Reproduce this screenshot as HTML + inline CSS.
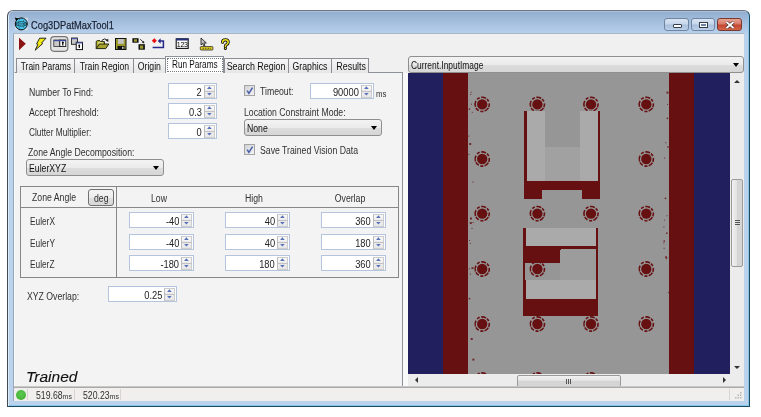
<!DOCTYPE html>
<html><head><meta charset="utf-8"><style>
*{box-sizing:border-box;margin:0;padding:0}
body{will-change:transform}
html,body{width:761px;height:417px;overflow:hidden;background:#fff;font-family:"Liberation Sans",sans-serif;font-size:10px;color:#303030}
div{position:absolute}
.t{white-space:pre;line-height:11px;transform:scaleX(0.87);transform-origin:0 0}
.tc{white-space:pre;line-height:11px;transform:translateX(-50%) scaleX(0.87);transform-origin:50% 0}
#win{left:7px;top:10px;width:743px;height:397px;border:1px solid #404a54;border-top-color:#6c727a;border-right-color:#1e4a5c;border-bottom-color:#1e4a5c;border-radius:6px 6px 0 0;background:linear-gradient(#c4d8ee 0px,#94aed0 1px,#b6d0ec 22px,#bad2ec 23px,#bad2ec 100%);box-shadow:inset 1px 0 0 #dcebf8,inset -1px -1px 0 #86c6ec}
#client{left:13px;top:33px;width:731px;height:368px;background:#f0f0f0;border-left:1px solid #98a8bc;border-top:1px solid #aab6c4}
.spin{background:#fff;border:1px solid #b4c4dc}
.sv{top:3px;line-height:11px;white-space:pre;color:#222;transform:scaleX(0.93);transform-origin:100% 0}
.sb{right:1px;width:11px;height:6px;border:1px solid #d2d2d2;border-left-color:#c2c2c2;background:linear-gradient(#f6f6f6,#e9e9e9)}
.sb.up{top:1px}
.sb.dn{top:7px}
.sbx{position:absolute;right:1px;top:1px}
.combo{border:1px solid #8f8f8f;border-radius:3px;background:linear-gradient(#f3f3f3 0%,#ebebeb 50%,#dddddd 51%,#d6d6d6 100%)}
.cv{left:2px;top:3px;line-height:11px;white-space:pre;color:#111;transform:scaleX(0.87);transform-origin:0 0}
.carr{right:4px;top:6px;width:0;height:0;border-left:3.5px solid transparent;border-right:3.5px solid transparent;border-top:4px solid #000}
.chk{width:11px;height:11px;border:1px solid #a4a4a4;background:linear-gradient(135deg,#cfd2d6,#f4f4f4)}
.chk svg{position:absolute;left:-1px;top:-1px}
.tab{top:58px;height:15px;padding-top:2px;border:1px solid #8c8e94;border-bottom:none;background:linear-gradient(#f6f6f6,#e6e6e6);line-height:12px;white-space:pre;color:#111;text-align:center}
.tab span{display:inline-block;transform:scaleX(0.87)}
</style></head><body>
<svg width="0" height="0" style="position:absolute"><defs><linearGradient id="sbg" x1="0" y1="0" x2="0" y2="1"><stop offset="0" stop-color="#f8f8f8"/><stop offset="1" stop-color="#e6e6e6"/></linearGradient></defs></svg>
<div id="win"></div>
<div id="client"></div>
<svg style="position:absolute;left:14px;top:17px" width="15" height="14" viewBox="0 0 15 14"><rect x="1" y="0.6" width="13" height="12.6" fill="#dfe6ee" opacity="0.7"/><circle cx="7.3" cy="6.9" r="6" fill="#48ccf2" stroke="#0c0c10" stroke-width="1"/><ellipse cx="7.3" cy="6.9" rx="5.6" ry="2.2" fill="none" stroke="#0c0c10" stroke-width="0.7"/><path d="M2 6.9 H12.6" stroke="#0c0c10" stroke-width="0.6"/><ellipse cx="7.3" cy="6.9" rx="2.6" ry="5.6" fill="none" stroke="#0c0c10" stroke-width="0.6" stroke-dasharray="1.2 1.6"/><path d="M0.8 0.6 L4.6 1.4 L2 4.2 Z" fill="#000"/></svg>
<div class="t" style="left:31px;top:19px;font-size:11.5px;line-height:13px;color:#1a2233;transform:scaleX(0.81);-webkit-text-stroke:0.25px #1a2233">Cog3DPatMaxTool1</div>
<div style="left:664px;top:18px;width:25px;height:13px;border:1px solid #6f85a3;border-radius:3px;background:linear-gradient(#d8e4f2 0,#c6d6ea 45%,#a9c0dc 55%,#bcd0e8 100%)"><div style="left:8px;top:5px;width:9px;height:4px;background:#fff;border:1px solid #36404c;border-radius:1px"></div></div>
<div style="left:691px;top:18px;width:24px;height:13px;border:1px solid #6f85a3;border-radius:3px;background:linear-gradient(#d8e4f2 0,#c6d6ea 45%,#a9c0dc 55%,#bcd0e8 100%)"><div style="left:7px;top:3px;width:9px;height:6px;background:#fff;border:1px solid #36404c"><div style="left:1px;top:1px;width:5px;height:2px;background:#6f85a3"></div></div></div>
<div style="left:717px;top:18px;width:25px;height:13px;border:1px solid #7a3a30;border-radius:3px;background:linear-gradient(#e8a492 0,#d9796a 45%,#c44630 55%,#d2674a 100%)"><svg style="position:absolute;left:7px;top:2px" width="10" height="8" viewBox="0 0 10 8"><path d="M1.5 1 L8.5 7 M8.5 1 L1.5 7" stroke="#3a2a2a" stroke-width="3"/><path d="M1.5 1 L8.5 7 M8.5 1 L1.5 7" stroke="#fff" stroke-width="1.8"/></svg></div>
<svg style="position:absolute;left:0;top:0" width="761" height="60" viewBox="0 0 761 60"><path d="M19 37.8 L25.8 43.8 L19 50.2 Z" fill="#8a1212"/><path d="M39.6 38.2 L46 38.2 L41.6 43 L42.6 43.6 L35.2 50.2 L37.8 44.6 L36.6 44 Z" fill="#f2ea10" stroke="#111" stroke-width="0.9" stroke-linejoin="round"/><rect x="50.7" y="36.7" width="17.2" height="14.6" rx="3.5" fill="#e4e4e4" stroke="#767676" stroke-width="1.2"/><rect x="53.8" y="40" width="6" height="6.5" fill="#c8c8c8" stroke="#333" stroke-width="0.8"/><rect x="59.8" y="40" width="6" height="6.5" fill="#fff" stroke="#111" stroke-width="0.9"/><rect x="53.8" y="40" width="12" height="1.2" fill="#3e4aa0"/><path d="M62.8 42 L62.8 45.5" stroke="#000" stroke-width="1.2"/><circle cx="62.8" cy="42.5" r="1" fill="#000"/><rect x="71.5" y="38" width="6" height="6.3" fill="#c8c8c8" stroke="#222" stroke-width="0.9"/><rect x="71.5" y="38" width="6" height="1.2" fill="#4a58a8"/><rect x="76.2" y="42.3" width="6.3" height="7.3" fill="#fff" stroke="#111" stroke-width="1"/><rect x="76.2" y="42.3" width="6.3" height="1.2" fill="#4a58a8"/><path d="M79.3 45 L79.3 48" stroke="#000" stroke-width="1.2"/><circle cx="79.3" cy="45.3" r="0.9" fill="#000"/><path d="M96.2 48.6 L96.2 41.4 L97.4 40.6 L99.8 40.6 L100.6 41.6 L104.4 41.6 L104.4 44" fill="#b8b834" stroke="#141400" stroke-width="0.9"/><path d="M96.2 48.6 L99.4 44 L108.8 44 L105.8 48.6 Z" fill="#a4a42e" stroke="#141400" stroke-width="0.9" stroke-linejoin="round"/><path d="M98.2 43.6 L98.2 42.8 L103.4 42.8" stroke="#f2f2c0" stroke-width="0.8" fill="none"/><path d="M101.6 40.6 Q104.6 37.4 107.4 40.2" stroke="#222" stroke-width="1" fill="none"/><path d="M105.6 40.4 L108.4 42 L108.2 38.8 Z" fill="#222"/><rect x="115.5" y="38.5" width="10.5" height="11" fill="#9a9a2a" stroke="#111" stroke-width="1"/><rect x="118" y="39" width="5.8" height="4.8" fill="#c4c4c4"/><rect x="117.5" y="46" width="7" height="3.6" fill="#111"/><rect x="122" y="46.8" width="1.6" height="2" fill="#ccc"/><rect x="132.4" y="38.2" width="6.2" height="4.5" fill="#111"/><rect x="134" y="39.3" width="3" height="2.4" fill="#9a9a2a"/><rect x="138.5" y="44.2" width="6.4" height="5.5" fill="#111"/><rect x="140" y="45.5" width="3.2" height="3.2" fill="#9a9a2a"/><path d="M140.2 39.2 L143.8 42.6" stroke="#222" stroke-width="0.9"/><path d="M144.3 43.2 L144 40.8 L141.8 43 Z" fill="#222"/><path d="M154.3 38.3 L156.8 40.8 L154.3 43.3 L151.8 40.8 Z" fill="#ee1010"/><path d="M152.6 47.5 L163.4 47.5 L163.4 41 L159 41" stroke="#24288a" stroke-width="1.5" fill="none"/><path d="M157.8 41 L160.6 38.2 L160.6 43.8 Z" fill="#24288a"/><rect x="176.2" y="38.8" width="12" height="9.6" fill="#fff" stroke="#111" stroke-width="1.1"/><rect x="176" y="38.5" width="12.4" height="2" fill="#27307a"/><text x="182.2" y="47.3" font-family="Liberation Sans" font-size="7" text-anchor="middle" fill="#000" letter-spacing="-0.3">123</text><path d="M201 38 L201 45 L202.6 43.6 L204 46 L205 45.4 L203.8 43 L206.4 43 Z" fill="#c0c0c0" stroke="#111" stroke-width="0.8"/><rect x="200.3" y="46.6" width="12.6" height="3.4" rx="0.8" fill="#e8d820" stroke="#222" stroke-width="0.8"/><path d="M202.5 48.3 L211 48.3" stroke="#333" stroke-width="0.8" stroke-dasharray="1.6 1"/><path d="M222.6 42.2 Q222.6 39.8 225.4 39.8 Q228.2 39.8 228.2 42.2 Q228.2 43.8 226.4 44.6 Q225.4 45.1 225.4 46.4" fill="none" stroke="#111" stroke-width="3.2" stroke-linecap="round"/><circle cx="225.4" cy="48.4" r="1.5" fill="#111"/><path d="M222.6 42.2 Q222.6 39.8 225.4 39.8 Q228.2 39.8 228.2 42.2 Q228.2 43.8 226.4 44.6 Q225.4 45.1 225.4 46.4" fill="none" stroke="#ece21a" stroke-width="1.5" stroke-linecap="round"/><circle cx="225.4" cy="48.4" r="0.6" fill="#ece21a"/></svg>
<div style="left:14px;top:72px;width:389px;height:315px;border:1px solid #8d9199;border-left-color:#fbfbfb;border-bottom:none;background:#f3f3f3"></div>
<div style="left:403px;top:73px;width:5px;height:314px;background:#f9f9f9"></div>
<div class="tab" style="left:16px;width:59px"><span style="transform:translateX(-1px) scaleX(0.84)">Train Params</span></div>
<div class="tab" style="left:74px;width:60px"><span style="transform:translateX(0px) scaleX(0.87)">Train Region</span></div>
<div class="tab" style="left:133px;width:33px"><span style="transform:translateX(0px) scaleX(0.87)">Origin</span></div>
<div class="tab" style="left:224px;width:65px"><span style="transform:translateX(-2px) scaleX(0.89)">Search Region</span></div>
<div class="tab" style="left:288px;width:44px"><span style="transform:translateX(0px) scaleX(0.87)">Graphics</span></div>
<div class="tab" style="left:331px;width:38px"><span style="transform:translateX(1.5px) scaleX(0.89)">Results</span></div>
<div class="tab sel" style="left:165px;top:56px;width:59px;height:17px;padding-top:2px;background:#fff;line-height:12px;z-index:2;border-color:#8d9199"><span style="transform:scaleX(0.82)">Run Params</span><div style="left:1px;top:1px;width:56px;height:14px;border:1px dotted #7a7a7a"></div></div>
<div class="t" style="left:29px;top:87px;">Number To Find:</div>
<div class="t" style="left:29px;top:107px;">Accept Threshold:</div>
<div class="t" style="left:29px;top:127px;transform:scaleX(0.83)">Clutter Multiplier:</div>
<div class="spin" style="left:168px;top:83px;width:49px;height:16px"><div class="sv" style="right:14px">2</div><svg class="sbx" width="11" height="13" viewBox="0 0 11 13"><rect x="0.5" y="0.5" width="10" height="12" fill="url(#sbg)" stroke="#cdcdcd"/><path d="M0.5 6.5 H10.5" stroke="#c2c2c2" stroke-width="1.2"/><path d="M0.5 0.5 V12.5" stroke="#bdbdbd"/><path d="M3.1 4 L5.4 1.2 L7.7 4 Z" fill="#5870b8"/><path d="M3.1 8 L5.4 10.5 L7.7 8 Z" fill="#5870b8"/></svg></div>
<div class="spin" style="left:168px;top:103px;width:49px;height:16px"><div class="sv" style="right:14px">0.3</div><svg class="sbx" width="11" height="13" viewBox="0 0 11 13"><rect x="0.5" y="0.5" width="10" height="12" fill="url(#sbg)" stroke="#cdcdcd"/><path d="M0.5 6.5 H10.5" stroke="#c2c2c2" stroke-width="1.2"/><path d="M0.5 0.5 V12.5" stroke="#bdbdbd"/><path d="M3.1 4 L5.4 1.2 L7.7 4 Z" fill="#5870b8"/><path d="M3.1 8 L5.4 10.5 L7.7 8 Z" fill="#5870b8"/></svg></div>
<div class="spin" style="left:168px;top:123px;width:49px;height:16px"><div class="sv" style="right:14px">0</div><svg class="sbx" width="11" height="13" viewBox="0 0 11 13"><rect x="0.5" y="0.5" width="10" height="12" fill="url(#sbg)" stroke="#cdcdcd"/><path d="M0.5 6.5 H10.5" stroke="#c2c2c2" stroke-width="1.2"/><path d="M0.5 0.5 V12.5" stroke="#bdbdbd"/><path d="M3.1 4 L5.4 1.2 L7.7 4 Z" fill="#5870b8"/><path d="M3.1 8 L5.4 10.5 L7.7 8 Z" fill="#5870b8"/></svg></div>
<div class="t" style="left:28px;top:147px;">Zone Angle Decomposition:</div>
<div class="combo" style="left:26px;top:159px;width:138px;height:17px"><div class="cv" style="">EulerXYZ</div><div class="carr"></div></div>
<div class="chk" style="left:244px;top:85px"><svg width="11" height="11" viewBox="0 0 11 11"><path d="M3.2 5.6 L4.9 8.4 L8.6 2.6" stroke="#4a5ea8" stroke-width="1.5" fill="none"/></svg></div>
<div class="t" style="left:260px;top:86px;">Timeout:</div>
<div class="spin" style="left:310px;top:83px;width:64px;height:16px"><div class="sv" style="right:14px">90000</div><svg class="sbx" width="11" height="13" viewBox="0 0 11 13"><rect x="0.5" y="0.5" width="10" height="12" fill="url(#sbg)" stroke="#cdcdcd"/><path d="M0.5 6.5 H10.5" stroke="#c2c2c2" stroke-width="1.2"/><path d="M0.5 0.5 V12.5" stroke="#bdbdbd"/><path d="M3.1 4 L5.4 1.2 L7.7 4 Z" fill="#5870b8"/><path d="M3.1 8 L5.4 10.5 L7.7 8 Z" fill="#5870b8"/></svg></div>
<div class="t" style="left:376px;top:89px;font-size:9px">ms</div>
<div class="t" style="left:244px;top:107px;">Location Constraint Mode:</div>
<div class="combo" style="left:244px;top:119px;width:138px;height:17px"><div class="cv" style="">None</div><div class="carr"></div></div>
<div class="chk" style="left:244px;top:144px"><svg width="11" height="11" viewBox="0 0 11 11"><path d="M3.2 5.6 L4.9 8.4 L8.6 2.6" stroke="#4a5ea8" stroke-width="1.5" fill="none"/></svg></div>
<div class="t" style="left:260px;top:145px;">Save Trained Vision Data</div>
<div style="left:20px;top:186px;width:379px;height:92px;border:1px solid #878787"></div>
<div style="left:21px;top:207px;width:377px;height:1px;background:#878787"></div>
<div style="left:116px;top:187px;width:1px;height:90px;background:#878787"></div>
<div class="t" style="left:32px;top:192px;">Zone Angle</div>
<div style="left:88px;top:189px;width:26px;height:17px;border:1px solid #707070;border-radius:3px;background:linear-gradient(#f4f4f4 0%,#ececec 50%,#dedede 51%,#d8d8d8 100%)"><div class="t" style="left:5px;top:3px">deg</div></div>
<div class="tc" style="left:159px;top:193px;">Low</div>
<div class="tc" style="left:254px;top:193px;">High</div>
<div class="tc" style="left:350px;top:193px;">Overlap</div>
<div class="t" style="left:30px;top:216px;transform:scaleX(0.83)">EulerX</div>
<div class="spin" style="left:129px;top:212px;width:65px;height:16px"><div class="sv" style="right:14px">-40</div><svg class="sbx" width="11" height="13" viewBox="0 0 11 13"><rect x="0.5" y="0.5" width="10" height="12" fill="url(#sbg)" stroke="#cdcdcd"/><path d="M0.5 6.5 H10.5" stroke="#c2c2c2" stroke-width="1.2"/><path d="M0.5 0.5 V12.5" stroke="#bdbdbd"/><path d="M3.1 4 L5.4 1.2 L7.7 4 Z" fill="#5870b8"/><path d="M3.1 8 L5.4 10.5 L7.7 8 Z" fill="#5870b8"/></svg></div>
<div class="spin" style="left:225px;top:212px;width:65px;height:16px"><div class="sv" style="right:14px">40</div><svg class="sbx" width="11" height="13" viewBox="0 0 11 13"><rect x="0.5" y="0.5" width="10" height="12" fill="url(#sbg)" stroke="#cdcdcd"/><path d="M0.5 6.5 H10.5" stroke="#c2c2c2" stroke-width="1.2"/><path d="M0.5 0.5 V12.5" stroke="#bdbdbd"/><path d="M3.1 4 L5.4 1.2 L7.7 4 Z" fill="#5870b8"/><path d="M3.1 8 L5.4 10.5 L7.7 8 Z" fill="#5870b8"/></svg></div>
<div class="spin" style="left:321px;top:212px;width:65px;height:16px"><div class="sv" style="right:14px">360</div><svg class="sbx" width="11" height="13" viewBox="0 0 11 13"><rect x="0.5" y="0.5" width="10" height="12" fill="url(#sbg)" stroke="#cdcdcd"/><path d="M0.5 6.5 H10.5" stroke="#c2c2c2" stroke-width="1.2"/><path d="M0.5 0.5 V12.5" stroke="#bdbdbd"/><path d="M3.1 4 L5.4 1.2 L7.7 4 Z" fill="#5870b8"/><path d="M3.1 8 L5.4 10.5 L7.7 8 Z" fill="#5870b8"/></svg></div>
<div class="t" style="left:30px;top:238px;transform:scaleX(0.83)">EulerY</div>
<div class="spin" style="left:129px;top:234px;width:65px;height:16px"><div class="sv" style="right:14px">-40</div><svg class="sbx" width="11" height="13" viewBox="0 0 11 13"><rect x="0.5" y="0.5" width="10" height="12" fill="url(#sbg)" stroke="#cdcdcd"/><path d="M0.5 6.5 H10.5" stroke="#c2c2c2" stroke-width="1.2"/><path d="M0.5 0.5 V12.5" stroke="#bdbdbd"/><path d="M3.1 4 L5.4 1.2 L7.7 4 Z" fill="#5870b8"/><path d="M3.1 8 L5.4 10.5 L7.7 8 Z" fill="#5870b8"/></svg></div>
<div class="spin" style="left:225px;top:234px;width:65px;height:16px"><div class="sv" style="right:14px">40</div><svg class="sbx" width="11" height="13" viewBox="0 0 11 13"><rect x="0.5" y="0.5" width="10" height="12" fill="url(#sbg)" stroke="#cdcdcd"/><path d="M0.5 6.5 H10.5" stroke="#c2c2c2" stroke-width="1.2"/><path d="M0.5 0.5 V12.5" stroke="#bdbdbd"/><path d="M3.1 4 L5.4 1.2 L7.7 4 Z" fill="#5870b8"/><path d="M3.1 8 L5.4 10.5 L7.7 8 Z" fill="#5870b8"/></svg></div>
<div class="spin" style="left:321px;top:234px;width:65px;height:16px"><div class="sv" style="right:14px">180</div><svg class="sbx" width="11" height="13" viewBox="0 0 11 13"><rect x="0.5" y="0.5" width="10" height="12" fill="url(#sbg)" stroke="#cdcdcd"/><path d="M0.5 6.5 H10.5" stroke="#c2c2c2" stroke-width="1.2"/><path d="M0.5 0.5 V12.5" stroke="#bdbdbd"/><path d="M3.1 4 L5.4 1.2 L7.7 4 Z" fill="#5870b8"/><path d="M3.1 8 L5.4 10.5 L7.7 8 Z" fill="#5870b8"/></svg></div>
<div class="t" style="left:30px;top:259px;transform:scaleX(0.83)">EulerZ</div>
<div class="spin" style="left:129px;top:255px;width:65px;height:16px"><div class="sv" style="right:14px">-180</div><svg class="sbx" width="11" height="13" viewBox="0 0 11 13"><rect x="0.5" y="0.5" width="10" height="12" fill="url(#sbg)" stroke="#cdcdcd"/><path d="M0.5 6.5 H10.5" stroke="#c2c2c2" stroke-width="1.2"/><path d="M0.5 0.5 V12.5" stroke="#bdbdbd"/><path d="M3.1 4 L5.4 1.2 L7.7 4 Z" fill="#5870b8"/><path d="M3.1 8 L5.4 10.5 L7.7 8 Z" fill="#5870b8"/></svg></div>
<div class="spin" style="left:225px;top:255px;width:65px;height:16px"><div class="sv" style="right:14px">180</div><svg class="sbx" width="11" height="13" viewBox="0 0 11 13"><rect x="0.5" y="0.5" width="10" height="12" fill="url(#sbg)" stroke="#cdcdcd"/><path d="M0.5 6.5 H10.5" stroke="#c2c2c2" stroke-width="1.2"/><path d="M0.5 0.5 V12.5" stroke="#bdbdbd"/><path d="M3.1 4 L5.4 1.2 L7.7 4 Z" fill="#5870b8"/><path d="M3.1 8 L5.4 10.5 L7.7 8 Z" fill="#5870b8"/></svg></div>
<div class="spin" style="left:321px;top:255px;width:65px;height:16px"><div class="sv" style="right:14px">360</div><svg class="sbx" width="11" height="13" viewBox="0 0 11 13"><rect x="0.5" y="0.5" width="10" height="12" fill="url(#sbg)" stroke="#cdcdcd"/><path d="M0.5 6.5 H10.5" stroke="#c2c2c2" stroke-width="1.2"/><path d="M0.5 0.5 V12.5" stroke="#bdbdbd"/><path d="M3.1 4 L5.4 1.2 L7.7 4 Z" fill="#5870b8"/><path d="M3.1 8 L5.4 10.5 L7.7 8 Z" fill="#5870b8"/></svg></div>
<div class="t" style="left:27px;top:291px;">XYZ Overlap:</div>
<div class="spin" style="left:108px;top:286px;width:69px;height:16px"><div class="sv" style="right:14px">0.25</div><svg class="sbx" width="11" height="13" viewBox="0 0 11 13"><rect x="0.5" y="0.5" width="10" height="12" fill="url(#sbg)" stroke="#cdcdcd"/><path d="M0.5 6.5 H10.5" stroke="#c2c2c2" stroke-width="1.2"/><path d="M0.5 0.5 V12.5" stroke="#bdbdbd"/><path d="M3.1 4 L5.4 1.2 L7.7 4 Z" fill="#5870b8"/><path d="M3.1 8 L5.4 10.5 L7.7 8 Z" fill="#5870b8"/></svg></div>
<div class="t" style="left:26px;top:368px;font-size:15.5px;font-style:italic;line-height:18px;color:#111;transform:none;-webkit-text-stroke:0.12px #111">Trained</div>
<svg style="position:absolute;left:0;top:0" width="761" height="417" viewBox="0 0 761 417"><defs><clipPath id="ic"><rect x="408" y="73" width="322" height="301"/></clipPath></defs><g clip-path="url(#ic)"><rect x="408" y="73" width="322" height="301" fill="#211f5e"/><rect x="443" y="73" width="25" height="301" fill="#671012"/><rect x="669" y="73" width="25" height="301" fill="#671012"/><rect x="468" y="73" width="201" height="301" fill="#969696"/><circle cx="482.2" cy="104.4" r="5.2" fill="#671012"/><circle cx="482.2" cy="104.4" r="7.1" fill="none" stroke="#671012" stroke-width="1.6" stroke-dasharray="5 1.2 3 1.8 4 1 6 2 3 1.5" transform="rotate(30 482.2 104.4)"/><circle cx="537.4" cy="104.4" r="5.2" fill="#671012"/><circle cx="537.4" cy="104.4" r="7.1" fill="none" stroke="#671012" stroke-width="1.6" stroke-dasharray="5 1.2 3 1.8 4 1 6 2 3 1.5" transform="rotate(30 537.4 104.4)"/><circle cx="591.0" cy="104.4" r="5.2" fill="#671012"/><circle cx="591.0" cy="104.4" r="7.1" fill="none" stroke="#671012" stroke-width="1.6" stroke-dasharray="5 1.2 3 1.8 4 1 6 2 3 1.5" transform="rotate(30 591.0 104.4)"/><circle cx="646.3" cy="104.4" r="5.2" fill="#671012"/><circle cx="646.3" cy="104.4" r="7.1" fill="none" stroke="#671012" stroke-width="1.6" stroke-dasharray="5 1.2 3 1.8 4 1 6 2 3 1.5" transform="rotate(30 646.3 104.4)"/><circle cx="482.2" cy="159.0" r="5.2" fill="#671012"/><circle cx="482.2" cy="159.0" r="7.1" fill="none" stroke="#671012" stroke-width="1.6" stroke-dasharray="5 1.2 3 1.8 4 1 6 2 3 1.5" transform="rotate(30 482.2 159.0)"/><circle cx="646.3" cy="159.0" r="5.2" fill="#671012"/><circle cx="646.3" cy="159.0" r="7.1" fill="none" stroke="#671012" stroke-width="1.6" stroke-dasharray="5 1.2 3 1.8 4 1 6 2 3 1.5" transform="rotate(30 646.3 159.0)"/><circle cx="482.2" cy="213.6" r="5.2" fill="#671012"/><circle cx="482.2" cy="213.6" r="7.1" fill="none" stroke="#671012" stroke-width="1.6" stroke-dasharray="5 1.2 3 1.8 4 1 6 2 3 1.5" transform="rotate(30 482.2 213.6)"/><circle cx="537.4" cy="213.6" r="5.2" fill="#671012"/><circle cx="537.4" cy="213.6" r="7.1" fill="none" stroke="#671012" stroke-width="1.6" stroke-dasharray="5 1.2 3 1.8 4 1 6 2 3 1.5" transform="rotate(30 537.4 213.6)"/><circle cx="591.0" cy="213.6" r="5.2" fill="#671012"/><circle cx="591.0" cy="213.6" r="7.1" fill="none" stroke="#671012" stroke-width="1.6" stroke-dasharray="5 1.2 3 1.8 4 1 6 2 3 1.5" transform="rotate(30 591.0 213.6)"/><circle cx="646.3" cy="213.6" r="5.2" fill="#671012"/><circle cx="646.3" cy="213.6" r="7.1" fill="none" stroke="#671012" stroke-width="1.6" stroke-dasharray="5 1.2 3 1.8 4 1 6 2 3 1.5" transform="rotate(30 646.3 213.6)"/><circle cx="482.2" cy="269.0" r="5.2" fill="#671012"/><circle cx="482.2" cy="269.0" r="7.1" fill="none" stroke="#671012" stroke-width="1.6" stroke-dasharray="5 1.2 3 1.8 4 1 6 2 3 1.5" transform="rotate(30 482.2 269.0)"/><circle cx="537.4" cy="269.0" r="5.2" fill="#671012"/><circle cx="537.4" cy="269.0" r="7.1" fill="none" stroke="#671012" stroke-width="1.6" stroke-dasharray="5 1.2 3 1.8 4 1 6 2 3 1.5" transform="rotate(30 537.4 269.0)"/><circle cx="646.3" cy="269.0" r="5.2" fill="#671012"/><circle cx="646.3" cy="269.0" r="7.1" fill="none" stroke="#671012" stroke-width="1.6" stroke-dasharray="5 1.2 3 1.8 4 1 6 2 3 1.5" transform="rotate(30 646.3 269.0)"/><circle cx="482.2" cy="324.0" r="5.2" fill="#671012"/><circle cx="482.2" cy="324.0" r="7.1" fill="none" stroke="#671012" stroke-width="1.6" stroke-dasharray="5 1.2 3 1.8 4 1 6 2 3 1.5" transform="rotate(30 482.2 324.0)"/><circle cx="537.4" cy="324.0" r="5.2" fill="#671012"/><circle cx="537.4" cy="324.0" r="7.1" fill="none" stroke="#671012" stroke-width="1.6" stroke-dasharray="5 1.2 3 1.8 4 1 6 2 3 1.5" transform="rotate(30 537.4 324.0)"/><circle cx="591.0" cy="324.0" r="5.2" fill="#671012"/><circle cx="591.0" cy="324.0" r="7.1" fill="none" stroke="#671012" stroke-width="1.6" stroke-dasharray="5 1.2 3 1.8 4 1 6 2 3 1.5" transform="rotate(30 591.0 324.0)"/><circle cx="646.3" cy="324.0" r="5.2" fill="#671012"/><circle cx="646.3" cy="324.0" r="7.1" fill="none" stroke="#671012" stroke-width="1.6" stroke-dasharray="5 1.2 3 1.8 4 1 6 2 3 1.5" transform="rotate(30 646.3 324.0)"/><circle cx="482.2" cy="380.0" r="5.2" fill="#671012"/><circle cx="482.2" cy="380.0" r="7.1" fill="none" stroke="#671012" stroke-width="1.6" stroke-dasharray="5 1.2 3 1.8 4 1 6 2 3 1.5" transform="rotate(30 482.2 380.0)"/><circle cx="537.4" cy="380.0" r="5.2" fill="#671012"/><circle cx="537.4" cy="380.0" r="7.1" fill="none" stroke="#671012" stroke-width="1.6" stroke-dasharray="5 1.2 3 1.8 4 1 6 2 3 1.5" transform="rotate(30 537.4 380.0)"/><circle cx="591.0" cy="380.0" r="5.2" fill="#671012"/><circle cx="591.0" cy="380.0" r="7.1" fill="none" stroke="#671012" stroke-width="1.6" stroke-dasharray="5 1.2 3 1.8 4 1 6 2 3 1.5" transform="rotate(30 591.0 380.0)"/><g shape-rendering="crispEdges"><rect x="524" y="111" width="76" height="88" fill="#671012"/><rect x="527" y="111" width="18" height="70" fill="#aaaaaa"/><rect x="580" y="111" width="18" height="70" fill="#aaaaaa"/><rect x="545" y="111" width="35" height="36" fill="#969696"/><rect x="545" y="147" width="35" height="34" fill="#a1a1a1"/><rect x="542" y="190" width="40" height="9" fill="#969696"/><rect x="523" y="228" width="75" height="88" fill="#671012"/><rect x="526" y="228" width="70" height="18" fill="#aaaaaa"/><rect x="525" y="263" width="35" height="17" fill="#969696"/><path d="M560 280 L560 252 Q560 249 563 249 L596 249 L596 280 Z" fill="#9c9c9c"/><rect x="526" y="280" width="70" height="19" fill="#aaaaaa"/></g><circle cx="537.4" cy="269.0" r="5.2" fill="#671012"/><circle cx="537.4" cy="269.0" r="7.1" fill="none" stroke="#671012" stroke-width="1.6" stroke-dasharray="5 1.2 3 1.8 4 1 6 2 3 1.5" transform="rotate(30 537.4 269.0)"/><rect x="468.8" y="268.3" width="1" height="1" fill="#671012" opacity="0.8"/><rect x="663.6" y="247.8" width="1" height="1" fill="#671012" opacity="0.8"/><rect x="470.2" y="94.0" width="1" height="1" fill="#671012" opacity="0.8"/><rect x="663.4" y="242.6" width="1" height="1" fill="#671012" opacity="0.8"/><rect x="666.5" y="91.6" width="2" height="2" fill="#671012" opacity="0.8"/><rect x="469.1" y="240.0" width="1" height="1" fill="#671012" opacity="0.8"/><rect x="468.7" y="108.3" width="1.5" height="1.5" fill="#671012" opacity="0.8"/><rect x="667.1" y="103.9" width="1" height="1" fill="#671012" opacity="0.8"/><rect x="470.7" y="91.8" width="1" height="1" fill="#671012" opacity="0.8"/><rect x="666.0" y="232.5" width="1.5" height="1.5" fill="#671012" opacity="0.8"/><rect x="472.6" y="181.5" width="1" height="1" fill="#671012" opacity="0.8"/><rect x="667.2" y="146.2" width="1.5" height="1.5" fill="#671012" opacity="0.8"/><rect x="668.3" y="291.8" width="1.5" height="1.5" fill="#671012" opacity="0.8"/><rect x="663.4" y="226.6" width="1" height="1" fill="#671012" opacity="0.8"/><rect x="663.9" y="219.7" width="1" height="1" fill="#671012" opacity="0.8"/><rect x="663.5" y="240.4" width="1.5" height="1.5" fill="#671012" opacity="0.8"/><rect x="469.8" y="222.0" width="2" height="2" fill="#671012" opacity="0.8"/><rect x="468.5" y="154.0" width="1" height="1" fill="#671012" opacity="0.8"/><rect x="471.5" y="267.1" width="2" height="2" fill="#671012" opacity="0.8"/><rect x="469.9" y="273.6" width="1" height="1" fill="#671012" opacity="0.8"/><rect x="665.1" y="256.3" width="2" height="2" fill="#671012" opacity="0.8"/><rect x="471.8" y="111.8" width="1" height="1" fill="#671012" opacity="0.8"/><rect x="472.6" y="222.0" width="1" height="1" fill="#671012" opacity="0.8"/><rect x="470.7" y="338.0" width="2" height="2" fill="#671012" opacity="0.8"/><rect x="664.7" y="197.6" width="1.5" height="1.5" fill="#671012" opacity="0.8"/><rect x="665.3" y="142.2" width="1" height="1" fill="#671012" opacity="0.8"/><rect x="469.2" y="143.0" width="2" height="2" fill="#671012" opacity="0.8"/><rect x="664.1" y="157.6" width="1" height="1" fill="#671012" opacity="0.8"/><rect x="469.8" y="242.9" width="1" height="1" fill="#671012" opacity="0.8"/><rect x="666.1" y="258.3" width="1" height="1" fill="#671012" opacity="0.8"/><rect x="472.4" y="358.6" width="2" height="2" fill="#671012" opacity="0.8"/><rect x="470.0" y="217.5" width="2" height="2" fill="#671012" opacity="0.8"/><rect x="468.3" y="135.6" width="1" height="1" fill="#671012" opacity="0.8"/><rect x="471.0" y="103.7" width="1" height="1" fill="#671012" opacity="0.8"/><rect x="668.7" y="257.1" width="1" height="1" fill="#671012" opacity="0.8"/><rect x="666.7" y="117.6" width="1.5" height="1.5" fill="#671012" opacity="0.8"/><rect x="666.6" y="215.2" width="1" height="1" fill="#671012" opacity="0.8"/><rect x="669.0" y="212.8" width="2" height="2" fill="#671012" opacity="0.8"/><rect x="468.7" y="297.9" width="1.5" height="1.5" fill="#671012" opacity="0.8"/><rect x="471.5" y="227.9" width="1" height="1" fill="#671012" opacity="0.8"/></g></svg>
<div class="combo" style="left:408px;top:56px;width:336px;height:17px"><div class="cv" style="transform:scaleX(0.84)">Current.InputImage</div><div class="carr"></div></div>
<div style="left:730px;top:73px;width:14px;height:301px;background:#ececec"></div>
<div style="left:734px;top:80px;width:0;height:0;border-left:3px solid transparent;border-right:3px solid transparent;border-bottom:3px solid #333"></div>
<div style="left:734px;top:366px;width:0;height:0;border-left:3px solid transparent;border-right:3px solid transparent;border-top:3px solid #333"></div>
<div style="left:731px;top:179px;width:12px;height:88px;border:1px solid #9a9a9a;border-radius:2px;background:linear-gradient(90deg,#f2f2f2,#e2e2e2 50%,#d4d4d4 51%,#d6d6d6)"><div style="left:3px;top:40px;width:5px;height:5px;background:repeating-linear-gradient(#555 0 1px,transparent 1px 2px)"></div></div>
<div style="left:408px;top:374px;width:336px;height:13px;background:#ececec"></div>
<div style="left:415px;top:377px;width:0;height:0;border-top:3px solid transparent;border-bottom:3px solid transparent;border-right:3px solid #333"></div>
<div style="left:723px;top:377px;width:0;height:0;border-top:3px solid transparent;border-bottom:3px solid transparent;border-left:3px solid #333"></div>
<div style="left:517px;top:375px;width:104px;height:12px;border:1px solid #9a9a9a;border-radius:2px;background:linear-gradient(#f2f2f2,#e2e2e2 50%,#d4d4d4 51%,#d6d6d6)"><div style="left:48px;top:3px;width:5px;height:5px;background:repeating-linear-gradient(90deg,#555 0 1px,transparent 1px 2px)"></div></div>
<div style="left:14px;top:386px;width:730px;height:15px;background:#f1eeee;border-top:1px solid #c8c8c8;box-shadow:inset 0 1px 0 #a9a9a9"></div>
<div style="left:16px;top:390px;width:10px;height:10px;border-radius:50%;background:radial-gradient(circle at 50% 40%,#5cc850 0,#48b83c 60%,#34a02c 100%)"></div>
<div style="left:27px;top:389px;width:1px;height:11px;background:#d8d4d4"></div>
<div style="left:74px;top:389px;width:1px;height:11px;background:#d8d4d4"></div>
<div style="left:120px;top:389px;width:1px;height:11px;background:#d8d4d4"></div>
<div style="left:729px;top:389px;width:1px;height:11px;background:#d8d4d4"></div>
<div class="t" style="left:36px;top:390px;">519.68<span style="font-size:8px">ms</span></div>
<div class="t" style="left:83px;top:390px;">520.23<span style="font-size:8px">ms</span></div>
<svg style="position:absolute;left:734px;top:391px" width="9" height="9"><g fill="#b8b8b8"><rect x="6" y="1" width="1.5" height="1.5"/><rect x="3.5" y="3.5" width="1.5" height="1.5"/><rect x="6" y="3.5" width="1.5" height="1.5"/><rect x="1" y="6" width="1.5" height="1.5"/><rect x="3.5" y="6" width="1.5" height="1.5"/><rect x="6" y="6" width="1.5" height="1.5"/></g></svg>
</body></html>
